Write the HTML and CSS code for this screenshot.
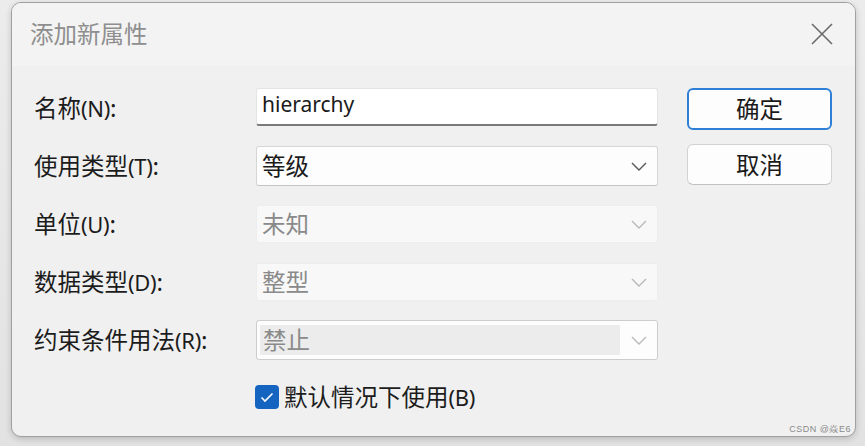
FILE: index.html
```html
<!DOCTYPE html>
<html lang="zh-CN">
<head>
<meta charset="utf-8">
<title>添加新属性</title>
<link rel="stylesheet" href="styles.css">
</head>
<body>
<div class="dialog">
  <div class="titlebar">
    <span class="title">添加新属性</span>
    <svg class="close" width="22" height="22" viewBox="0 0 22 22"><path d="M1 1 L21 21 M21 1 L1 21" stroke="#6a6a6a" stroke-width="1.6" fill="none"/></svg>
  </div>
  <div class="content">
    <div class="form">
      <label class="lbl">名称<span class="acc">(N)</span>:</label>
      <div class="field text"><span class="val">hierarchy</span></div>

      <label class="lbl">使用类型<span class="acc">(T)</span>:</label>
      <div class="field select"><span class="val">等级</span><svg class="chev" width="16" height="9" viewBox="0 0 16 9"><path d="M1 1 L8 8 L15 1" stroke="#555" stroke-width="1.4" fill="none"/></svg></div>

      <label class="lbl">单位<span class="acc">(U)</span>:</label>
      <div class="field select disabled"><span class="val">未知</span><svg class="chev" width="16" height="9" viewBox="0 0 16 9"><path d="M1 1 L8 8 L15 1" stroke="#b8b8b8" stroke-width="1.4" fill="none"/></svg></div>

      <label class="lbl">数据类型<span class="acc">(D)</span>:</label>
      <div class="field select disabled"><span class="val">整型</span><svg class="chev" width="16" height="9" viewBox="0 0 16 9"><path d="M1 1 L8 8 L15 1" stroke="#b8b8b8" stroke-width="1.4" fill="none"/></svg></div>

      <label class="lbl">约束条件用法<span class="acc">(R)</span>:</label>
      <div class="field select framed"><span class="val hl">禁止</span><svg class="chev" width="16" height="9" viewBox="0 0 16 9"><path d="M1 1 L8 8 L15 1" stroke="#b8b8b8" stroke-width="1.4" fill="none"/></svg></div>

      <div class="spacer"></div>
      <div class="check-row">
        <span class="checkbox"><svg width="14" height="11" viewBox="0 0 14 11"><path d="M1.5 5.5 L5 9 L12.5 1.5" stroke="#ffffff" stroke-width="1.6" fill="none"/></svg></span>
        <span class="check-label">默认情况下使用<span class="acc">(B)</span></span>
      </div>
    </div>
    <div class="buttons">
      <button class="btn primary">确定</button>
      <button class="btn">取消</button>
    </div>
  </div>
  <span class="watermark">CSDN @焱E6</span>
</div>
</body>
</html>
```

FILE: styles.css
```css
html, body {
  margin: 0;
  padding: 0;
}
body {
  width: 865px;
  height: 446px;
  overflow: hidden;
  background: linear-gradient(#ececec, #e2e2e2);
  font-family: "Noto Sans CJK SC", "Microsoft YaHei", "Noto Sans", sans-serif;
  padding-top: 2px;
  padding-left: 11px;
  box-sizing: border-box;
}
.dialog {
  position: relative;
  width: 845px;
  height: 435px;
  box-sizing: border-box;
  border: 1px solid #a0a0a0;
  border-radius: 10px;
  background: #f0f0f0;
  box-shadow: 0 2px 6px rgba(0,0,0,0.18);
  overflow: hidden;
  display: flex;
  flex-direction: column;
}
.titlebar {
  height: 63px;
  background: #f3f3f3;
  display: flex;
  align-items: center;
  justify-content: space-between;
  padding: 0 22px 0 18px;
  flex-shrink: 0;
}
.title {
  font-size: 23.5px;
  color: #8e8e8e;
  line-height: 1;
  margin-top: -1px;
}
.close {
  display: block;
  margin-top: -2px;
}
.content {
  display: flex;
  padding: 22px 0 0 22px;
  gap: 29px;
}
.form {
  display: grid;
  grid-template-columns: 222px 402px;
  grid-auto-rows: 40px;
  row-gap: 18px;
  align-items: center;
}
.lbl {
  font-size: 23.5px;
  color: #1c1c1c;
  line-height: 1;
  white-space: nowrap;
}
.acc {
  font-family: "Noto Sans", "Open Sans", sans-serif;
  font-size: 22px;
  letter-spacing: -0.3px;
}
.field {
  height: 39px;
  box-sizing: border-box;
  display: flex;
  align-items: center;
  justify-content: space-between;
  padding: 0 10px 0 5px;
  font-size: 23.5px;
  line-height: 1;
}
.field.text {
  height: 38px;
  align-self: start;
  background: #ffffff;
  border: 1px solid #e4e4e4;
  border-bottom: 2px solid #7a7a7a;
  border-radius: 3px;
  font-family: "Noto Sans", "Open Sans", sans-serif;
  font-size: 21px;
  color: #1a1a1a;
}
.field.text .val { margin-top: -4px; }
.field.select {
  height: 40px;
  background: #fdfdfd;
  border: 1px solid #d6d6d6;
  border-bottom-color: #c4c4c4;
  border-radius: 3px;
  color: #1a1a1a;
}
.field.disabled {
  height: 38px;
  background: #f8f8f8;
  border: 1px solid #ededed;
  color: #8a8a8a;
}
.field.framed {
  background: #fdfdfd;
  border: 1px solid #cdcdcd;
  color: #8a8a8a;
  padding-left: 3px;
}
.val.hl {
  background: #ececec;
  height: 30px;
  width: 360px;
  display: flex;
  align-items: center;
  padding-left: 3px;
  box-sizing: border-box;
}
.chev { display: block; flex-shrink: 0; }
.spacer { height: 40px; }
.check-row {
  display: flex;
  align-items: center;
  gap: 5px;
  margin-left: -1px;
  margin-top: -2px;
}
.checkbox {
  width: 24px;
  height: 24px;
  box-sizing: border-box;
  background: #1565c0;
  border-radius: 4px;
  display: flex;
  align-items: center;
  justify-content: center;
}
.checkbox svg { display: block; }
.check-label {
  font-size: 23.5px;
  color: #1c1c1c;
  line-height: 1;
}
.buttons {
  display: flex;
  flex-direction: column;
  gap: 14px;
}
.btn {
  width: 145px;
  height: 41px;
  box-sizing: border-box;
  background: #fdfdfd;
  border: 1px solid #d2d2d2;
  border-bottom-color: #c2c2c2;
  border-radius: 6px;
  font-family: "Noto Sans CJK SC", sans-serif;
  font-size: 23.5px;
  color: #1a1a1a;
  padding: 0;
  line-height: 1;
}
.btn.primary {
  border: 2px solid #2f7fd4;
  height: 42px;
}
.watermark {
  position: absolute;
  right: 4px;
  bottom: 1px;
  font-family: "Liberation Sans", sans-serif;
  font-size: 9px;
  color: #8a8a8a;
  letter-spacing: 0.5px;
}
```
